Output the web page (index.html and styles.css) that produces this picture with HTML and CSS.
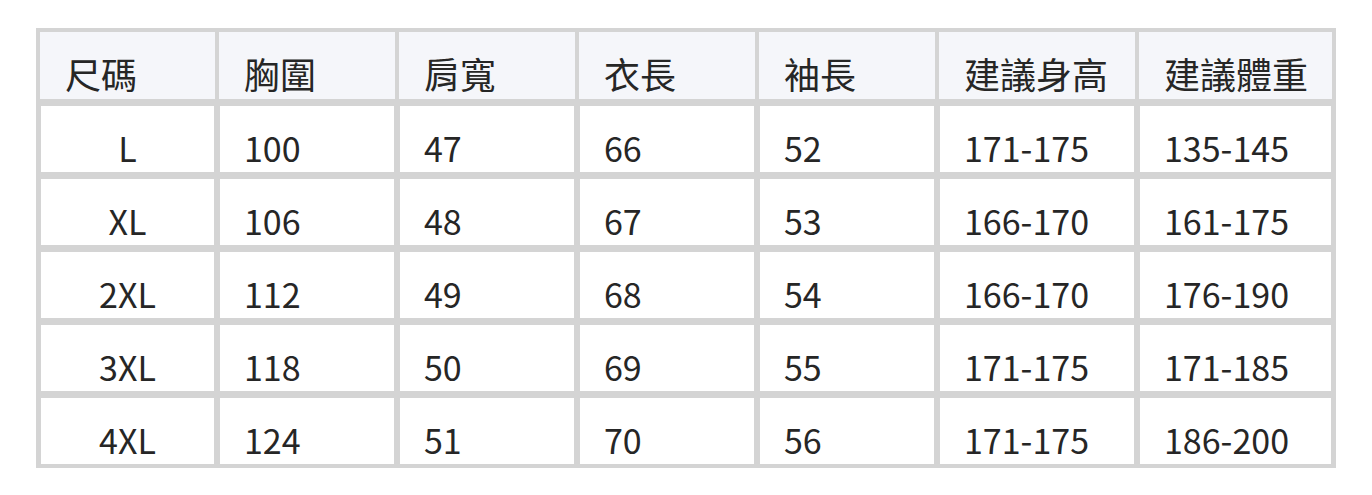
FILE: index.html
```html
<!DOCTYPE html>
<html lang="zh-Hant">
<head>
<meta charset="utf-8">
<title>尺碼表</title>
<link rel="stylesheet" href="styles.css">
</head>
<body>
<div class="size-table">
  <div class="cell head">尺碼</div>
  <div class="cell head">胸圍</div>
  <div class="cell head">肩寬</div>
  <div class="cell head">衣長</div>
  <div class="cell head">袖長</div>
  <div class="cell head">建議身高</div>
  <div class="cell head">建議體重</div>

  <div class="cell body size">L</div>
  <div class="cell body">100</div>
  <div class="cell body">47</div>
  <div class="cell body">66</div>
  <div class="cell body">52</div>
  <div class="cell body">171-175</div>
  <div class="cell body">135-145</div>

  <div class="cell body size">XL</div>
  <div class="cell body">106</div>
  <div class="cell body">48</div>
  <div class="cell body">67</div>
  <div class="cell body">53</div>
  <div class="cell body">166-170</div>
  <div class="cell body">161-175</div>

  <div class="cell body size">2XL</div>
  <div class="cell body">112</div>
  <div class="cell body">49</div>
  <div class="cell body">68</div>
  <div class="cell body">54</div>
  <div class="cell body">166-170</div>
  <div class="cell body">176-190</div>

  <div class="cell body size">3XL</div>
  <div class="cell body">118</div>
  <div class="cell body">50</div>
  <div class="cell body">69</div>
  <div class="cell body">55</div>
  <div class="cell body">171-175</div>
  <div class="cell body">171-185</div>

  <div class="cell body size">4XL</div>
  <div class="cell body">124</div>
  <div class="cell body">51</div>
  <div class="cell body">70</div>
  <div class="cell body">56</div>
  <div class="cell body">171-175</div>
  <div class="cell body">186-200</div>
</div>
</body>
</html>
```

FILE: styles.css
```css
html, body {
  margin: 0;
  padding: 0;
  background: #ffffff;
}

body {
  padding: 28px 0 0 36px;
  font-family: "Noto Sans CJK TC", "Noto Sans", sans-serif;
  color: #262626;
}

.size-table {
  display: grid;
  width: max-content;
  grid-template-columns: 175px 176px 176px 176px 176px 196px 193px;
  grid-template-rows: 67px repeat(5, 66px);
  column-gap: 4px;
  row-gap: 7px;
  padding: 4px;
  background: #d4d4d4;
}

.cell {
  display: flex;
  align-items: flex-end;
  padding-left: 25px;
  white-space: nowrap;
  line-height: 1.448;
}

.head {
  background: #f5f6fa;
  font-size: 36px;
  padding-bottom: 0;
}

.body {
  background: #ffffff;
  font-size: 34px;
  margin: 0 1px;
  padding-left: 24px;
}

.size {
  justify-content: center;
  padding-left: 0;
}
```
